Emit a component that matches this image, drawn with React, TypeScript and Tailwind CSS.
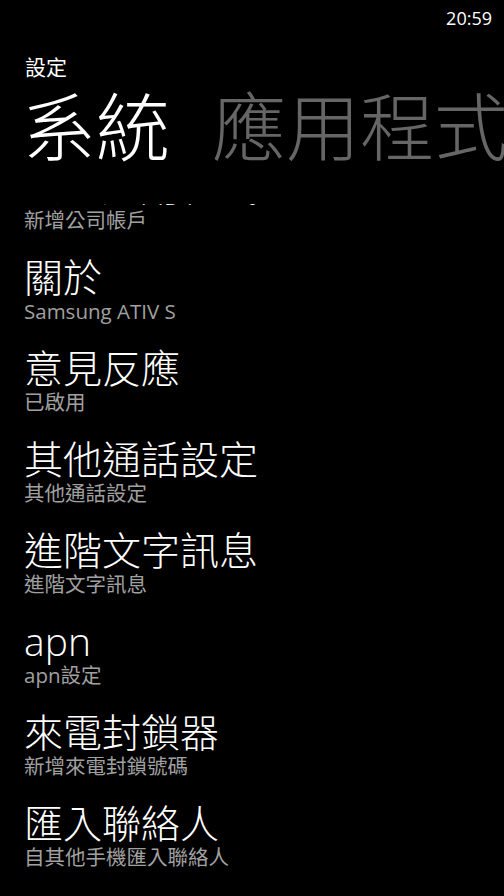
const items = [
  { title: "公司應用程式", sub: "新增公司帳戶" },
  { title: "關於", sub: "Samsung ATIV S" },
  { title: "意見反應", sub: "已啟用" },
  { title: "其他通話設定", sub: "其他通話設定" },
  { title: "進階文字訊息", sub: "進階文字訊息" },
  { title: "apn", sub: "apn設定" },
  { title: "來電封鎖器", sub: "新增來電封鎖號碼" },
  { title: "匯入聯絡人", sub: "自其他手機匯入聯絡人" },
];

const font = "font-['Open_Sans','Noto_Sans_CJK_TC',sans-serif]";

export default function App() {
  return (
    <div className={`w-[504px] h-[896px] bg-black text-white overflow-hidden flex flex-col ${font}`}>
      {/* status bar */}
      <div className="h-[36px] flex justify-end items-center pr-[12px] text-[18px] leading-none">
        20:59
      </div>

      {/* header */}
      <div className="pl-[25px] mt-[18px] text-[21px] leading-[26px]">設定</div>
      <div className="flex whitespace-nowrap pl-[22px] mt-[4px] text-[74px] leading-[86px] font-light">
        <span>系統</span>
        <span className="ml-[42px] text-[#666666]">應用程式</span>
      </div>

      {/* list */}
      <div className="mt-[34px] flex-1 overflow-hidden">
        <div className="-mt-[40px] flex flex-col">
          {items.map((it) => (
            <div key={it.title} className="pl-[24px] pb-[23px] flex flex-col">
              <div className="text-[39px] leading-[44px] font-light">{it.title}</div>
              <div className="text-[20.5px] leading-[24px] text-[#a0a0a0]">{it.sub}</div>
            </div>
          ))}
        </div>
      </div>
    </div>
  );
}
